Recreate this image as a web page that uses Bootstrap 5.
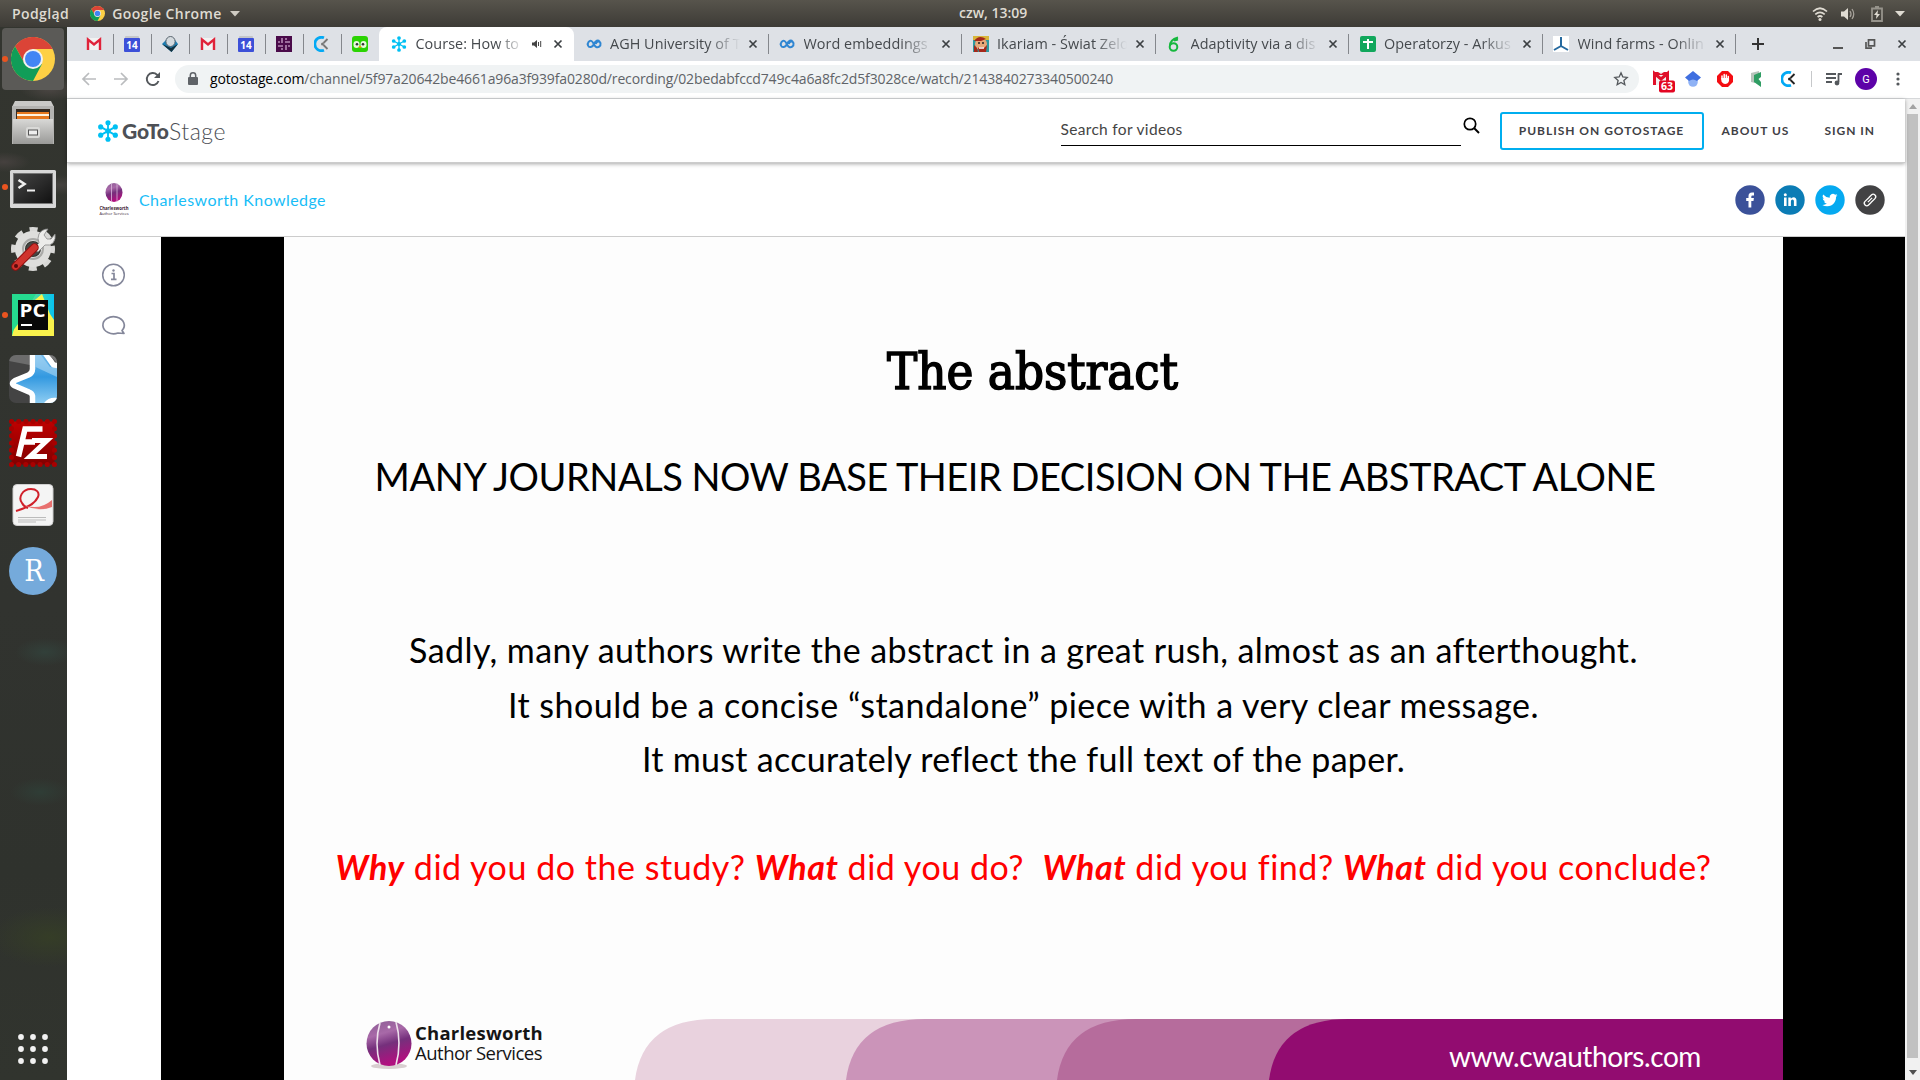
<!DOCTYPE html>
<html lang="pl">
<head>
<meta charset="utf-8">
<meta name="viewport" content="width=device-width, initial-scale=1">
<title>Course: How to - GoToStage</title>
<link href="https://cdn.jsdelivr.net/npm/bootstrap@5.3.0/dist/css/bootstrap.min.css" rel="stylesheet">
<style>
html,body{height:100%}
body{width:1920px;height:1080px;overflow:hidden;background:#fff;font-family:"Open Sans","Noto Sans",sans-serif;color:#000;line-height:1}
svg{display:block;flex:none;overflow:visible}
/* GNOME top bar */
.topbar{height:27px;background:linear-gradient(#57544c,#3d3b36);color:#dfdbd2;font:600 14px/26px "Open Sans","Noto Sans",sans-serif}
.topbar-start{width:959px;padding-left:12px;letter-spacing:.4px}
/* dock */
.desk{height:1053px}
.dock{width:67px;padding-right:1px;background:radial-gradient(ellipse 30px 12px at 50px 62px,#4b4643,transparent),radial-gradient(ellipse 26px 10px at 4px 135px,#46413f,transparent),radial-gradient(ellipse 30px 10px at 60px 158px,#44423f,transparent),radial-gradient(ellipse 30px 14px at 45px 625px,#32403a,transparent),radial-gradient(ellipse 30px 14px at 40px 765px,#2f3d36,transparent),radial-gradient(ellipse 60px 30px at 50px 910px,#353d27,transparent),linear-gradient(#33352f 0,#31332f 55%,#2f322d 80%,#31342e 100%)}
.slot{height:64px;flex:none;position:relative}
.slot.on::before{content:"";position:absolute;left:2px;top:1px;width:62px;height:62px;border-radius:4px;background:#5b5a57}
.slot.run::after{content:"";position:absolute;left:2px;top:29px;width:6px;height:6px;border-radius:50%;background:#e95420}
.slot svg{position:relative}
/* browser chrome */
.tabs{height:34px;background:#dee1e6;padding-left:8px}
.pin{width:38px}
.pin+.pin,.tabx+.tabx,.tabend{background:linear-gradient(#84878c,#84878c) left 50%/1px 20px no-repeat}
.tabx{width:193.5px;padding:0 10px 0 11.500px;font-size:14.4px;color:#45494d;letter-spacing:.05px}
.tabx.act+.tabx{background:none}
.tabx .ttl{flex:1;overflow:hidden;white-space:nowrap;line-height:24px;margin:0 8px 0 8.500px;-webkit-mask-image:linear-gradient(90deg,#000 75%,transparent);mask-image:linear-gradient(90deg,#000 75%,transparent)}
.tabx.act{width:195px;background:#fff;border-radius:8px 8px 0 0;padding-left:12px}
.tool{height:38px;border-bottom:1px solid #d6d8da;background:#fff;padding-bottom:2px}
.omni{width:1464px;height:28px;border-radius:14px;background:#f0f3f4;font-size:14px;color:#5f6368;padding:0 11px 0 12px}
.url{letter-spacing:-.14px;margin-left:12px}
.rule{width:1px;height:16px;background:#c6c8ca;margin:0 14px}
/* site */
.page{height:981px}
.view{width:1838px}
.sitehead{height:64px;padding-left:30px;box-shadow:0 1px 4px rgba(0,0,0,.35);border-bottom:1px solid #ccc;font-family:Lato,sans-serif;z-index:1;position:relative}
.logo-b{font:900 21px/24px Lato,sans-serif;color:#4d5056;margin-left:3px}
.logo-l{font:300 23px/24px Lato,sans-serif;color:#4d5056;letter-spacing:.5px}
.srch{width:400px;height:30px;border-bottom:1px solid #000;font-size:15.5px;letter-spacing:.32px;color:#444;line-height:27px}
.pub{height:38px;width:204px;border:2px solid #00aeef;border-radius:3px}
.nav-t{font:700 12px/36px Lato,sans-serif;letter-spacing:.97px;color:#3f4145;padding-top:1px}
.chan{height:74px;border-bottom:1px solid #ccc;padding-left:31px;font-family:Lato,sans-serif}
.chname{font-size:16px;color:#18bdf7;letter-spacing:.43px;margin-left:9px}
.chlogo{width:32px}
.mini{font:700 4.300px/5px "Open Sans",sans-serif;color:#3a2030}
.mini.thin{font-weight:400;font-size:4px}
.side{width:94px;padding:26px 0 0 34px}
/* video slide */
.video{width:1744px;height:843px;background:#000}
.slide{width:1499px;margin-left:123px;background:#fdfdfd;height:843px;position:relative;text-align:center;font-family:Lato,sans-serif}
.slide>div{white-space:nowrap}
.h-abs{font:400 50.5px/60px "DejaVu Serif Condensed","DejaVu Serif",serif;-webkit-text-stroke:1.500px #000;padding-top:105px;padding-right:2px}
.upper{font-size:38px;line-height:48px;margin-top:50px;letter-spacing:-.48px;padding-right:37px}
.body-l,.red{font-size:34px;line-height:54.5px;padding-right:20px}
.l1{margin-top:123px;letter-spacing:.41px}
.l2{letter-spacing:.48px}
.l3{letter-spacing:.3px}
.red{margin-top:53px;color:#f00;letter-spacing:.53px}
.bands{position:absolute;left:0;bottom:0}
.brand-s{position:absolute;left:131px;top:786px;font:400 18.5px/20px "Open Sans",sans-serif;letter-spacing:-.5px;color:#151515;text-align:left}
.brand-s b{letter-spacing:.23px}
.www{position:absolute;left:1165px;top:801px;font:400 28px/36px Lato,sans-serif;letter-spacing:-.42px;color:#fff}
.sbar{width:15px;background:#f1f1f1}
.sbar .thumb{width:11px;height:944px;background:#c1c1c1}
</style>
</head>
<body>
<svg width="0" height="0" class="position-absolute">
<defs>
<linearGradient id="ball" x1="0" x2=".3" y2="1"><stop offset="0" stop-color="#8a5c94"/><stop offset=".35" stop-color="#a869a8"/><stop offset=".6" stop-color="#75307c"/><stop offset="1" stop-color="#b0107f"/></linearGradient>
<linearGradient id="grey" x2="0" y2="1"><stop stop-color="#d8d8d6"/><stop offset="1" stop-color="#9a9a98"/></linearGradient>
<linearGradient id="dark" x2="1" y2="1"><stop stop-color="#444"/><stop offset=".5" stop-color="#2c2c2c"/><stop offset="1" stop-color="#111"/></linearGradient>
<linearGradient id="blue" x2="0" y2="1"><stop stop-color="#86c4ef"/><stop offset=".45" stop-color="#3399e0"/><stop offset="1" stop-color="#a9dcf8"/></linearGradient>
<linearGradient id="redg" x2="0" y2="1"><stop stop-color="#bf0000"/><stop offset="1" stop-color="#820000"/></linearGradient>
<linearGradient id="pcg" x2="1" y2="0"><stop stop-color="#21d789"/><stop offset=".5" stop-color="#4fdc9a"/><stop offset="1" stop-color="#07c3f2"/></linearGradient>
<symbol id="chrome" viewBox="0 0 44 44"><circle cx="22" cy="22" r="22" fill="#fdd045"/><path d="M22 12H41.600A22 22 0 0 0 4 9.300L14 27z" fill="#db4437"/><path d="M4 9.300A22 22 0 0 0 22 44L31 27 22 31 13.300 26z" fill="#109d58"/><circle cx="22" cy="22" r="10" fill="#f1f1f1"/><circle cx="22" cy="22" r="8" fill="#4285f4"/></symbol>
<symbol id="gmail" viewBox="0 0 16 16"><path d="M1 2h14v12H1z" fill="#f2f2f2"/><path d="M2 14V3.500L8 8.500l6-5V14" fill="none" stroke="#e0233a" stroke-width="2.400"/></symbol>
<symbol id="cal" viewBox="0 0 16 16"><rect x="1" width="14" height="4" rx="1" fill="#c4c6c9"/><rect y="2" width="16" height="14" rx="1" fill="#3c50d8"/><text x="8" y="13" font-size="10" font-weight="700" text-anchor="middle" fill="#fff" font-family="Open Sans">14</text></symbol>
<symbol id="clk" viewBox="0 0 16 16"><path d="M10 1.800A6.700 6.700 0 1 0 10 14.200" fill="none" stroke="#03a9f4" stroke-width="2.800"/><path d="M9.500 7l4-4M9.500 9l4 4" stroke="currentColor" stroke-width="1.800"/><circle cx="8.500" cy="8" r="1.500" fill="currentColor"/></symbol>
<symbol id="flower" viewBox="0 0 24 24"><g stroke="#00c0f3" stroke-width="2" fill="#00c0f3"><path d="M12 3v18M4 7.500l16 9M4 16.500l16-9"/><g stroke="none"><circle cx="12" cy="12" r="3"/><circle cx="12" cy="3" r="2.800"/><circle cx="12" cy="21" r="2.800"/><circle cx="4" cy="7.500" r="2.800"/><circle cx="20" cy="7.500" r="2.800"/><circle cx="4" cy="16.500" r="2.800"/><circle cx="20" cy="16.500" r="2.800"/></g></g></symbol>
<symbol id="x" viewBox="0 0 10 10"><path d="M1.500 1.500l7 7M8.500 1.500l-7 7" stroke="#3c4043" stroke-width="1.700"/></symbol>
<symbol id="inf" viewBox="0 0 16 12"><path d="M13.500 3.500C12 1.500 9.500 2.500 8 6s-5 4-6 1.500S3.500 1.800 5.500 3s2.500 4.500 4.500 5.800 5-.500 4.500-3.300-4-2.600-4.700.500" fill="none" stroke="#2f86d2" stroke-width="2"/></symbol>
</defs>
</svg>

<header class="topbar d-flex">
  <div class="topbar-start d-flex align-items-center flex-shrink-0"><span>Podgląd</span><svg width="15" height="15" style="margin:0 7px 0 21px"><use href="#chrome"/></svg><span>Google Chrome</span><svg width="10" height="6" class="ms-2"><path d="M0 0h10L5 5.500z" fill="#cfcbc3"/></svg></div>
  <div class="text-nowrap">czw, 13:09</div>
  <div class="d-flex align-items-center justify-content-end flex-grow-1" style="padding-right:11px">
    <svg width="16" height="14" class="me-2" fill="none" stroke="#dfdbd2" stroke-width="1.700"><path d="M1 4.500Q8-2 15 4.500M3.300 7.300q4.700-4 9.400 0M5.600 10q2.400-2 4.800 0"/><circle cx="8" cy="12.500" r="1.500" fill="#dfdbd2" stroke="none"/></svg>
    <svg width="16" height="14" class="ms-1" style="margin-right:15px"><path d="M1 4.500h3L8 1v12L4 9.500H1z" fill="#dfdbd2"/><path d="M10 4q2 3 0 6M12 2q3.500 5 0 10" fill="none" stroke="#a5a199" stroke-width="1.300"/></svg>
    <svg width="12" height="16" style="margin-right:12px"><path d="M1 2.500h10v12.500H1zM4 1h4" fill="none" stroke="#96938b" stroke-width="1.800"/><path d="M7 4L3 9h2.500L5 13l4-5H6.500z" fill="#dfdbd2"/></svg>
    <svg width="10" height="6" class="me-1"><path d="M0 0h10L5 5.500z" fill="#dfdbd2"/></svg>
  </div>
</header>

<div class="desk d-flex">
<nav class="dock d-flex flex-column flex-shrink-0">
  <div class="slot on run d-flex align-items-center justify-content-center"><svg width="44" height="44"><use href="#chrome"/></svg></div>
  <div class="slot d-flex align-items-center justify-content-center"><svg width="42" height="44"><path d="M3 0h36l3 6H0z" fill="#c9c9c7"/><path d="M0 5h42v38H0z" fill="#b3b3b1"/><path d="M4 8h34v10H4z" fill="#332a22"/><path d="M5 11h32v7H5z" fill="#e6781e"/><path d="M5 13h32v2H5z" fill="#fff3df"/><path d="M1 18h40v25H1z" fill="url(#grey)"/><rect x="14" y="26" width="14" height="11" rx="2" fill="#d9d9d7"/><rect x="16.500" y="29" width="9" height="5" fill="#eee" stroke="#555"/></svg></div>
  <div class="slot run d-flex align-items-center justify-content-center pt-1"><svg width="46" height="38"><rect width="46" height="38" rx="1.500" fill="#d8d8d8"/><rect x="3" y="3" width="40" height="31" fill="#777"/><rect x="4" y="4" width="38" height="29" fill="url(#dark)"/><path d="M8.500 10l6 4-6 4" fill="none" stroke="#eee" stroke-width="2.600"/><path d="M17 20.500h8" stroke="#eee" stroke-width="2"/></svg></div>
  <div class="slot d-flex align-items-center justify-content-center pb-1"><svg width="44" height="44"><circle cx="22" cy="22" r="19.500" fill="none" stroke="#d8d8d6" stroke-width="5" stroke-dasharray="8 7.310" stroke-dashoffset="4"/><circle cx="22" cy="22" r="13" fill="none" stroke="#dededc" stroke-width="10"/><circle cx="22" cy="22" r="10" fill="none" stroke="#a9a9a7" stroke-width="2"/><circle cx="22" cy="22" r="7" fill="#474744"/><path d="M22 22l6-6q-2-5 0-9 3-5 9-5l-4 6 3 4h4l4-5q1 5-2 9-3 3-8 2l-7 7z" fill="#ececea" stroke="#888" stroke-width=".8"/><path d="M4.500 39.500L23.500 20.500" stroke="#931010" stroke-width="8.500" stroke-linecap="round"/><path d="M4.500 39.500L23.500 20.500" stroke="#d0332d" stroke-width="6.500" stroke-linecap="round"/><circle cx="5" cy="39" r="2" fill="#5c0b0b"/></svg></div>
  <div class="slot run d-flex align-items-center justify-content-center"><svg width="42" height="42"><path d="M0 0h42v42H0z" fill="url(#pcg)"/><path d="M0 42L6 20 30 0l8 20 4 6v16z" fill="#f9f24c"/><path d="M0 0h24L6 30 0 38z" fill="#25da8f"/><path d="M6 6h30v30H6z" fill="#080808"/><text x="7.500" y="23" font-size="18" font-weight="700" fill="#fff" font-family="Open Sans" textLength="26" lengthAdjust="spacingAndGlyphs">PC</text><path d="M9 30h11v2H9z" fill="#fff"/></svg></div>
  <div class="slot d-flex align-items-center justify-content-center"><svg width="48" height="48" viewBox="0 0 48 48"><clipPath id="rr"><rect width="48" height="48" rx="7"/></clipPath><g clip-path="url(#rr)"><path d="M0 0h48v48H0z" fill="#444"/><path d="M0 0h26v11L0 6z" fill="#6c6c6c"/><path d="M23.500-6v20q0 4-4 6L6 25.500q-5 3 0 5.500l14 6q3 1 3.500 4v15l30-8V11l-9-1-9-13z" fill="url(#blue)" stroke="#fff" stroke-width="5.500" stroke-linejoin="round"/><path d="M38-2l11 11V-2z" fill="#777"/><path d="M26.500 12L48 22V13l-7-1L31-1h-4.500z" fill="#b5dcf6" opacity=".55"/><path d="M37 50q4-6 13-4" fill="none" stroke="#fff" stroke-width="5.500"/></g></svg></div>
  <div class="slot d-flex align-items-center justify-content-center"><svg width="48" height="48"><rect x="2.500" y="2.500" width="43" height="43" fill="url(#redg)" stroke="#a80000" stroke-width="5" stroke-linecap="round" stroke-dasharray="0.100 7.067"/><g fill="none" stroke="#fff" stroke-width="5.500"><path d="M33.500 10H16L9.500 37.500M13 23h13"/><path d="M23 21.500h15L21 37.500h17" stroke-width="5"/></g></svg></div>
  <div class="slot d-flex align-items-center justify-content-center pb-1"><svg width="42" height="42"><rect x="1" y=".5" width="40" height="41" rx="4" fill="#f4f4f4" stroke="#cfcfcf"/><path d="M4 27Q22 22 26 13c2-5-2-8-7-8C10 5 6 14 10 19q2 4 6 5" fill="none" stroke="#d0202a" stroke-width="2"/><path d="M13 21.500q15 5 27-5.500v7q-12 5-27-1z" fill="#e8706f"/><path d="M6 33.500h28M6 36h28M6 38h18" stroke="#bbb"/></svg></div>
  <div class="slot d-flex align-items-center justify-content-center"><svg width="48" height="48"><circle cx="24" cy="24" r="24" fill="#75aadb"/><text x="25" y="33.500" font-size="29" text-anchor="middle" fill="#fff" font-family="DejaVu Serif Condensed">R</text></svg></div>
  <div class="mt-auto d-flex justify-content-center" style="padding-bottom:17px"><svg width="30" height="30" fill="#f2f2f2"><g id="dots"><circle cx="3" cy="4" r="2.900"/><circle cx="15" cy="4" r="2.900"/><circle cx="27" cy="4" r="2.900"/></g><use href="#dots" y="12"/><use href="#dots" y="24"/></svg></div>
</nav>

<main class="flex-grow-1 d-flex flex-column">
  <div class="tabs d-flex">
    <div class="pin d-flex align-items-center justify-content-center"><svg width="16" height="16"><use href="#gmail"/></svg></div>
    <div class="pin d-flex align-items-center justify-content-center"><svg width="16" height="16"><use href="#cal"/></svg></div>
    <div class="pin d-flex align-items-center justify-content-center"><svg width="16" height="16"><path d="M0 8l4-4h9l3 4-6.500 8z" fill="#1b7fb5"/><path d="M0 8l9 4 7-4-6.500 8z" fill="#14323f"/><ellipse cx="8.500" cy="5.500" rx="4.600" ry="5" fill="#d4dade" stroke="#59656f"/></svg></div>
    <div class="pin d-flex align-items-center justify-content-center"><svg width="16" height="16"><use href="#gmail"/></svg></div>
    <div class="pin d-flex align-items-center justify-content-center"><svg width="16" height="16"><use href="#cal"/></svg></div>
    <div class="pin d-flex align-items-center justify-content-center"><svg width="16" height="16"><path d="M0 0h16v16H0z" fill="#4a0b4a"/><path d="M6 2v5M10 9v5M9 6h5M2 10h5M10 2v2M6 12v2M2 6h2M12 10h2" stroke="#b58ab5" stroke-width="1.600"/></svg></div>
    <div class="pin d-flex align-items-center justify-content-center" style="color:#777"><svg width="16" height="16"><use href="#clk"/></svg></div>
    <div class="pin d-flex align-items-center justify-content-center"><svg width="16" height="16"><rect width="16" height="16" rx="3" fill="#2bd303"/><rect x="1.500" y="5" width="6" height="7" rx="3" fill="#e8f9dc"/><rect x="8.500" y="5" width="6" height="7" rx="3" fill="#e8f9dc"/><circle cx="5" cy="8.300" r="1.300" fill="#333"/><circle cx="11" cy="8.300" r="1.300" fill="#333"/><path d="M6.500 10h3L8 12.500z" fill="#ff9d00"/></svg></div>
    <div class="tabx act d-flex align-items-center"><svg width="16" height="16"><use href="#flower"/></svg><span class="ttl">Course: How to</span><svg width="10" height="10" style="margin-right:11px"><path d="M0 3.500h2L5 1v8L2 6.500H0z" fill="#444"/><path d="M6.500 3v4M8.700 2v6" stroke="#444"/></svg><svg width="10" height="10" style="margin-right:1px"><use href="#x"/></svg></div>
    <div class="tabx d-flex align-items-center"><svg width="16" height="12"><use href="#inf"/></svg><span class="ttl">AGH University of T</span><svg width="10" height="10"><use href="#x"/></svg></div>
    <div class="tabx d-flex align-items-center"><svg width="16" height="12"><use href="#inf"/></svg><span class="ttl">Word embeddings</span><svg width="10" height="10"><use href="#x"/></svg></div>
    <div class="tabx d-flex align-items-center"><svg width="16" height="16"><path d="M0 0h16v16H0z" fill="#2f9aa0"/><path d="M0 0h16v4H0z" fill="#d8b63a"/><circle cx="8" cy="8" r="6" fill="#e8a878"/><path d="M1 5q5-7 12-2l-5 2zM1 9l3 3 1 4H1zM5 12q3-2 6 0l3-3-1 7H6z" fill="#a5281a"/><path d="M5 7h2M9 7h2" stroke="#222" stroke-width="1.500"/><path d="M6 12h5" stroke="#fff" stroke-width="1.500"/></svg><span class="ttl">Ikariam - Świat Zelo</span><svg width="10" height="10"><use href="#x"/></svg></div>
    <div class="tabx d-flex align-items-center"><svg width="16" height="16" fill="none" stroke="#16b83e" stroke-width="2"><circle cx="7.500" cy="11" r="3.800"/><path d="M4 10Q3.500 4 12 1.500M8 4.500l4-1"/></svg><span class="ttl">Adaptivity via a dis</span><svg width="10" height="10"><use href="#x"/></svg></div>
    <div class="tabx d-flex align-items-center"><svg width="16" height="16"><rect width="16" height="16" rx="2" fill="#11a75c"/><path d="M8 3v10M3 6h10" stroke="#fff" stroke-width="2"/></svg><span class="ttl">Operatorzy - Arkus</span><svg width="10" height="10"><use href="#x"/></svg></div>
    <div class="tabx d-flex align-items-center"><svg width="16" height="16"><path d="M0 0h16v16H0z" fill="#fff"/><path d="M8 1v9M8 10l-7 4M8 10l7 4" stroke="#25699f" stroke-width="2"/></svg><span class="ttl">Wind farms - Onlin</span><svg width="10" height="10"><use href="#x"/></svg></div>
    <div class="tabend d-flex align-items-center flex-grow-1" style="padding-left:17px"><svg width="12" height="12"><path d="M6 0v12M0 6h12" stroke="#333" stroke-width="2"/></svg>
      <svg width="10" height="10" class="ms-auto"><path d="M0 9h10" stroke="#555" stroke-width="2"/></svg>
      <svg width="10" height="10" style="margin:0 22px"><path d="M3.500.8h6v6h-6zM1 3v6.200h6" fill="none" stroke="#555" stroke-width="1.700"/></svg>
      <svg width="10" height="10" style="margin-right:13px"><use href="#x"/></svg></div>
  </div>

  <div class="tool d-flex align-items-center">
    <svg width="14" height="14" style="margin-left:15px" fill="none" stroke="#babcbe" stroke-width="1.700"><path d="M14 7H1.500M7 1L1 7l6 6"/></svg>
    <svg width="14" height="14" style="margin-left:18px" fill="none" stroke="#babcbe" stroke-width="1.700"><path d="M0 7h12.500M7 1l6 6-6 6"/></svg>
    <svg width="14" height="14" style="margin:0 15px 0 18px"><path d="M12.500 9A6 6 0 1 1 11 2.700L13 5" fill="none" stroke="#54585c" stroke-width="1.900"/><path d="M14 0v6H8z" fill="#54585c"/></svg>
    <div class="omni d-flex align-items-center"><svg width="10" height="13" style="margin-left:1px"><rect y="5" width="10" height="8" rx="1" fill="#5f6368"/><path d="M2.300 5V3.500a2.700 2.700 0 0 1 5.400 0V5" fill="none" stroke="#5f6368" stroke-width="1.500"/></svg>
      <span class="url text-nowrap"><span class="text-black">gotostage.com</span>/channel/5f97a20642be4661a96a3f939fa0280d/recording/02bedabfccd749c4a6a8fc2d5f3028ce/watch/2143840273340500240</span>
      <svg width="14" height="14" class="ms-auto" viewBox="0 0 16 16"><path d="M8 1l2.100 4.700 5 .5-3.800 3.400 1.100 5L8 12l-4.400 2.600 1.100-5L.9 6.200l5-.5z" fill="none" stroke="#54585c" stroke-width="1.500"/></svg></div>
    <div class="d-flex align-items-center" style="margin-left:14px;gap:16px;color:#222">
      <svg width="16" height="16"><path d="M0 1h16v13H0z" fill="#f2f2f2"/><path d="M1.500 14V2.500L8 8l6.500-5.500V14" fill="none" stroke="#e0102a" stroke-width="3"/><path d="M0 1h5l3 2 3-2h5v3H0z" fill="#e0102a"/><rect x="6" y="9.500" width="16" height="12" rx="2" fill="#e30522"/><text x="14" y="19.300" font-size="10.500" font-weight="700" text-anchor="middle" fill="#fff" font-family="Open Sans">63</text></svg>
      <svg width="16" height="16"><circle cx="8" cy="11" r="4.800" fill="#8fb2f5"/><path d="M8 0l8 6.500-4 3.500q-4-3-8 0L0 6.500z" fill="#3f6fe0"/></svg>
      <svg width="16" height="16"><path d="M5 0h6l5 5v6l-5 5H5l-5-5V5z" fill="#f40d12"/><path d="M5 8V5M7.200 8V3.500M9.300 8V4M11.300 9V5.500" stroke="#fff" stroke-width="1.500" stroke-linecap="round"/><path d="M4.300 7h7.700v3q-1 3-4 3-3.700-1-3.700-4z" fill="#fff"/></svg>
      <svg width="16" height="16"><path d="M2 2l8-2v3L6 5v7l-4-1z" fill="#b8c4bc"/><path d="M5 4l7-3v5L9.500 8l2.500 3v5l-7-5z" fill="#2f9d63"/></svg>
      <svg width="16" height="16"><use href="#clk"/></svg>
    </div>
    <div class="rule"></div>
    <svg width="16" height="14"><path d="M0 2h10M0 6h10M0 10h6M12.500 1.500V10M12 2h4" stroke="#54585c" stroke-width="1.800"/><circle cx="11" cy="11" r="2.400" fill="#54585c"/></svg>
    <svg width="22" height="22" style="margin:0 19px 0 13px"><circle cx="11" cy="11" r="11" fill="#5d02a8"/><text x="11" y="15" font-size="11" text-anchor="middle" fill="#fff" font-family="Roboto">G</text></svg>
    <svg width="4" height="14" fill="#54585c"><circle cx="2" cy="2" r="1.600"/><circle cx="2" cy="7" r="1.600"/><circle cx="2" cy="12" r="1.600"/></svg>
  </div>

  <div class="page d-flex">
    <div class="view d-flex flex-column">
      <div class="sitehead d-flex align-items-center bg-white">
        <svg width="22" height="24"><use href="#flower"/></svg>
        <span class="logo-b">GoTo</span><span class="logo-l">Stage</span>
        <div class="d-flex ms-auto align-items-center">
          <div class="srch">Search for videos</div>
          <svg width="17" height="17" style="margin:-10px 20px 0 2px"><circle cx="7" cy="7" r="5.700" fill="none" stroke="#000" stroke-width="1.700"/><path d="M11 11l5 5" stroke="#000" stroke-width="2"/></svg>
          <div class="pub d-flex align-items-center justify-content-center nav-t">PUBLISH ON GOTOSTAGE</div>
          <div class="nav-t" style="margin-left:18px">ABOUT US</div>
          <div class="nav-t" style="margin:0 30px 0 35px">SIGN IN</div>
        </div>
      </div>
      <div class="chan d-flex align-items-center">
        <div class="chlogo d-flex flex-column align-items-center text-nowrap"><svg width="18" height="19" class="mb-1"><ellipse cx="9" cy="9.500" rx="8.500" ry="9.500" fill="url(#ball)"/><path d="M6.500.5v18M12 .5v18" stroke="#d9b9dc" stroke-width=".8"/></svg><div class="mini">Charlesworth</div><div class="mini thin">Author Services</div></div>
        <span class="chname">Charlesworth Knowledge</span>
        <div class="d-flex ms-auto" style="gap:10px;margin-right:20px;padding-top:1px">
          <svg width="30" height="30"><circle cx="15" cy="15" r="14.700" fill="#3b5199"/><path d="M13.500 22.500v-6.500h-2.300v-3h2.300v-2q0-3.500 3.500-3.500h2V10.500h-1.500q-1.200 0-1.200 1.200V13h2.600l-.4 3h-2.200v6.500z" fill="#fff"/></svg>
          <svg width="30" height="30"><circle cx="15" cy="15" r="14.700" fill="#0b7cb5"/><path d="M9 12.500h2.600V21H9zM13.300 12.500h2.500v1.200q.9-1.500 2.700-1.500 3 0 3 3.600V21h-2.600v-4.700q0-1.800-1.400-1.800-1.600 0-1.600 2V21h-2.600z" fill="#fff"/><circle cx="10.300" cy="9.800" r="1.500" fill="#fff"/></svg>
          <svg width="30" height="30"><circle cx="15" cy="15" r="14.700" fill="#05a9f0"/><path d="M22.500 10.300q-.8.400-1.800.5 1-.6 1.400-1.700-1 .5-2 .7a3.200 3.200 0 0 0-5.400 2.900q-3.900-.2-6.500-3.300-1.500 2.700 1 4.200-.8 0-1.500-.4 0 2.500 2.600 3.200-.7.200-1.400 0 .7 2 3 2.200-2 1.500-4.600 1.300 2.200 1.300 4.900 1.300c6 0 9-5 8.800-9.300q1-.7 1.500-1.600z" fill="#fff"/></svg>
          <svg width="30" height="30"><circle cx="15" cy="15" r="14.700" fill="#424244"/><g transform="rotate(-45 15 15)" fill="none" stroke="#fff" stroke-width="1.300"><path d="M16.500 12.500h-6a2.500 2.500 0 0 0 0 5h3.500M13.500 17.500h6a2.500 2.500 0 0 0 0-5H16M12 15h6"/></g></svg>
        </div>
      </div>
      <div class="d-flex">
        <div class="side flex-shrink-0">
          <svg width="24" height="24" fill="none" stroke="#84879a" stroke-width="1.500"><circle cx="12.500" cy="12" r="10.800"/><path d="M10.500 10.500H13V16M10 16.300h5.500" stroke-width="1.700"/><circle cx="12.500" cy="7.500" r="1.200" fill="#84879a" stroke="none"/></svg>
          <svg width="24" height="20" style="margin-top:28px" fill="none" stroke="#84879a" stroke-width="1.700"><path d="M21 15.500A10.700 8.500 0 1 0 17 18l6 .5z" stroke-linejoin="round"/></svg>
        </div>
        <div class="video flex-shrink-0">
          <div class="slide">
            <div class="h-abs">The abstract</div>
            <div class="upper">MANY JOURNALS NOW BASE THEIR DECISION ON THE ABSTRACT ALONE</div>
            <div class="body-l l1">Sadly, many authors write the abstract in a great rush, almost as an afterthought.</div>
            <div class="body-l l2">It should be a concise “standalone” piece with a very clear message.</div>
            <div class="body-l l3">It must accurately reflect the full text of the paper.</div>
            <div class="red"><b><i>Why</i></b> did you do the study? <b><i>What</i></b> did you do?&nbsp; <b><i>What</i></b> did you find? <b><i>What</i></b> did you conclude?</div>
            <svg class="bands" width="1499" height="61"><path d="M351 61Q359 0 430 0H700V61z" fill="#e9d2de"/><path d="M562 61Q570 0 641 0H900V61z" fill="#cb94b9"/><path d="M773 61Q781 0 852 0H1100V61z" fill="#b66c9c"/><path d="M985 61Q993 0 1064 0H1499V61z" fill="#920c70"/><ellipse cx="105" cy="47" rx="18" ry="3" fill="#d8cfd0"/><ellipse cx="105" cy="24.500" rx="22.500" ry="22.500" fill="url(#ball)"/><path d="M96 4q-6 20 0 42M112 3q6 21 0 43" fill="none" stroke="#eee2ec" stroke-width="1.600"/><circle cx="105" cy="8" r="1.500" fill="#fff"/></svg>
            <div class="brand-s"><b>Charlesworth</b><br>Author Services</div>
            <div class="www">www.cwauthors.com</div>
          </div>
        </div>
      </div>
    </div>
    <div class="sbar d-flex flex-column align-items-center"><svg width="8" height="15"><path d="M0 10h8L4 5z" fill="#a3a3a3"/></svg><div class="thumb"></div><svg width="8" height="15" class="mt-auto"><path d="M0 5h8l-4 5z" fill="#505050"/></svg></div>
  </div>
</main>
</div>
<script src="https://cdn.jsdelivr.net/npm/bootstrap@5.3.0/dist/js/bootstrap.bundle.min.js"></script>
</body>
</html>
